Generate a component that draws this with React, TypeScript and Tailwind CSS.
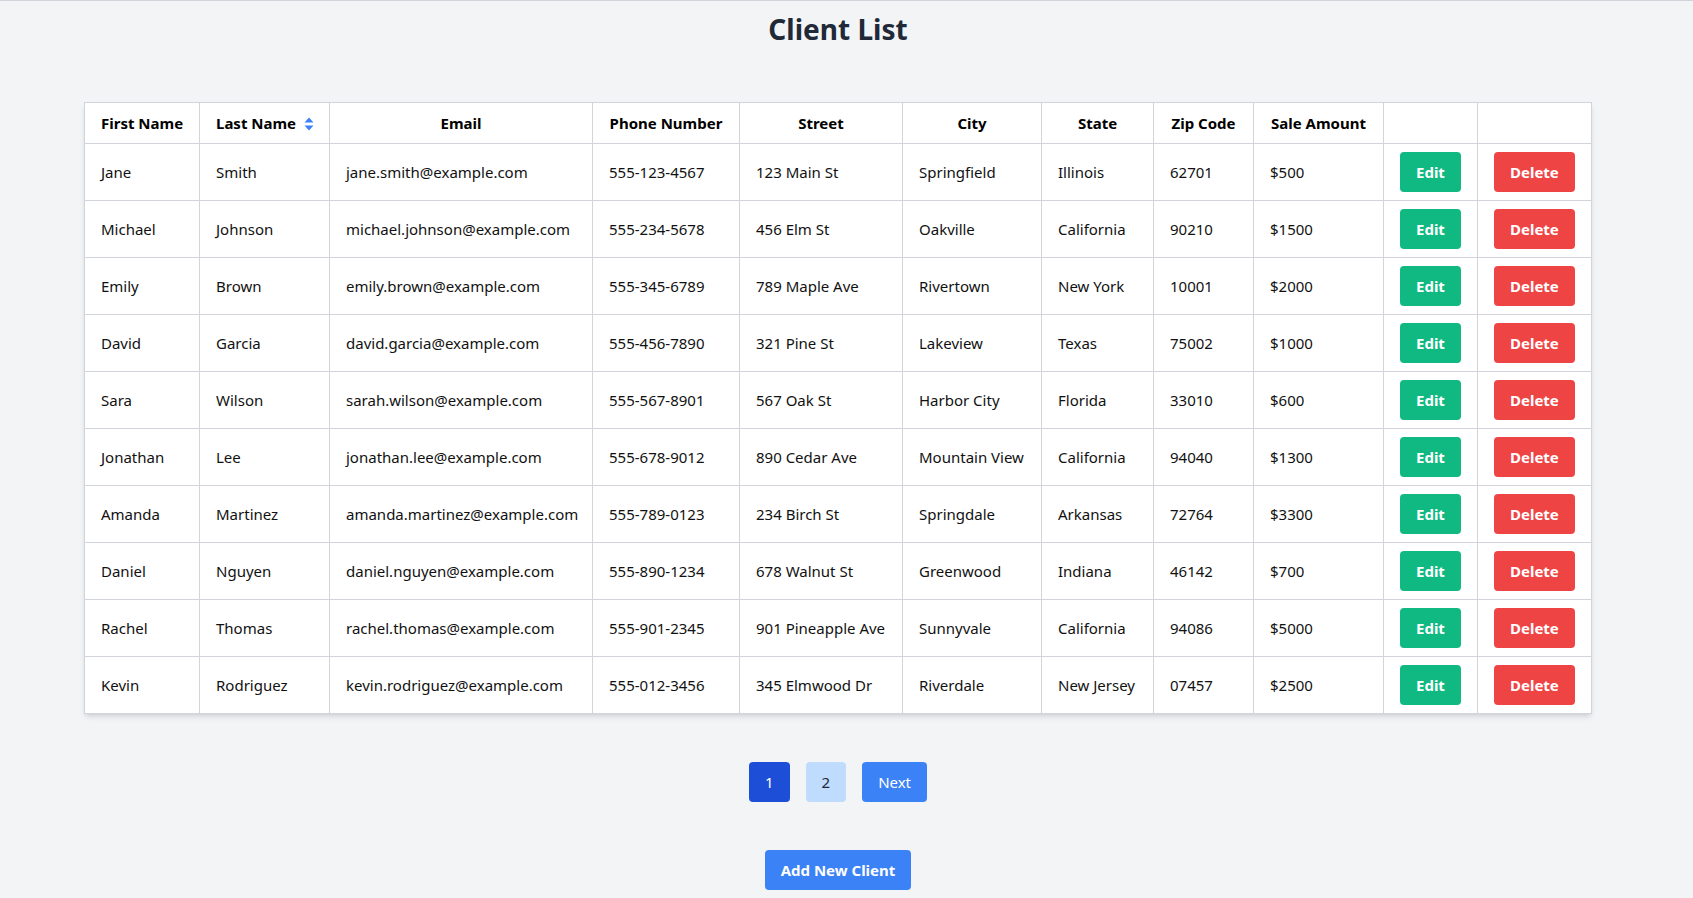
import React from 'react';

type Client = {
  first: string;
  last: string;
  email: string;
  phone: string;
  street: string;
  city: string;
  state: string;
  zip: string;
  amount: string;
};

const clients: Client[] = [
  { first: 'Jane', last: 'Smith', email: 'jane.smith@example.com', phone: '555-123-4567', street: '123 Main St', city: 'Springfield', state: 'Illinois', zip: '62701', amount: '$500' },
  { first: 'Michael', last: 'Johnson', email: 'michael.johnson@example.com', phone: '555-234-5678', street: '456 Elm St', city: 'Oakville', state: 'California', zip: '90210', amount: '$1500' },
  { first: 'Emily', last: 'Brown', email: 'emily.brown@example.com', phone: '555-345-6789', street: '789 Maple Ave', city: 'Rivertown', state: 'New York', zip: '10001', amount: '$2000' },
  { first: 'David', last: 'Garcia', email: 'david.garcia@example.com', phone: '555-456-7890', street: '321 Pine St', city: 'Lakeview', state: 'Texas', zip: '75002', amount: '$1000' },
  { first: 'Sara', last: 'Wilson', email: 'sarah.wilson@example.com', phone: '555-567-8901', street: '567 Oak St', city: 'Harbor City', state: 'Florida', zip: '33010', amount: '$600' },
  { first: 'Jonathan', last: 'Lee', email: 'jonathan.lee@example.com', phone: '555-678-9012', street: '890 Cedar Ave', city: 'Mountain View', state: 'California', zip: '94040', amount: '$1300' },
  { first: 'Amanda', last: 'Martinez', email: 'amanda.martinez@example.com', phone: '555-789-0123', street: '234 Birch St', city: 'Springdale', state: 'Arkansas', zip: '72764', amount: '$3300' },
  { first: 'Daniel', last: 'Nguyen', email: 'daniel.nguyen@example.com', phone: '555-890-1234', street: '678 Walnut St', city: 'Greenwood', state: 'Indiana', zip: '46142', amount: '$700' },
  { first: 'Rachel', last: 'Thomas', email: 'rachel.thomas@example.com', phone: '555-901-2345', street: '901 Pineapple Ave', city: 'Sunnyvale', state: 'California', zip: '94086', amount: '$5000' },
  { first: 'Kevin', last: 'Rodriguez', email: 'kevin.rodriguez@example.com', phone: '555-012-3456', street: '345 Elmwood Dr', city: 'Riverdale', state: 'New Jersey', zip: '07457', amount: '$2500' },
];

function SortIcon() {
  return (
    <svg width="10" height="14" viewBox="0 0 10 14" className="inline-block ml-2 -mt-0.5 align-middle">
      <path d="M5 0.5 L9.5 5.5 H0.5 Z" fill="#3b82f6" />
      <path d="M5 13.5 L9.5 8.5 H0.5 Z" fill="#3b82f6" />
    </svg>
  );
}

const th = 'border border-[#d1d5db] px-4 py-2 text-center font-bold text-black whitespace-nowrap';
const td = 'border border-[#d1d5db] px-4 py-2 text-left text-[#111] whitespace-nowrap';

export default function App() {
  return (
    <div
      className="min-h-screen bg-[#f3f4f6] border-t border-[#d1d5db] pr-[17px] pb-8 text-[15px] leading-6"
      style={{ fontFamily: '"Noto Sans", "Open Sans", sans-serif' }}
    >
      <h1 className="pt-[10px] text-center text-[28px] font-bold text-[#1f2937] leading-9">Client List</h1>

      {/* Table */}
      <div className="mt-[55px] flex justify-center">
        <table className="w-[1507px] table-fixed border-collapse bg-white shadow-md">
          <colgroup>
            <col className="w-[115px]" />
            <col className="w-[130px]" />
            <col className="w-[263px]" />
            <col className="w-[147px]" />
            <col className="w-[163px]" />
            <col className="w-[139px]" />
            <col className="w-[112px]" />
            <col className="w-[100px]" />
            <col className="w-[130px]" />
            <col className="w-[94px]" />
            <col className="w-[114px]" />
          </colgroup>
          <thead>
            <tr>
              <th className={th}>First Name</th>
              <th className={th}>
                Last Name
                <SortIcon />
              </th>
              <th className={th}>Email</th>
              <th className={th}>Phone Number</th>
              <th className={th}>Street</th>
              <th className={th}>City</th>
              <th className={th}>State</th>
              <th className={th}>Zip Code</th>
              <th className={th}>Sale Amount</th>
              <th className={th}></th>
              <th className={th}></th>
            </tr>
          </thead>
          <tbody>
            {clients.map((c) => (
              <tr key={c.email}>
                <td className={td}>{c.first}</td>
                <td className={td}>{c.last}</td>
                <td className={td}>{c.email}</td>
                <td className={td}>{c.phone}</td>
                <td className={td}>{c.street}</td>
                <td className={td}>{c.city}</td>
                <td className={td}>{c.state}</td>
                <td className={td}>{c.zip}</td>
                <td className={td}>{c.amount}</td>
                <td className={td}>
                  <button className="rounded bg-[#10b981] px-4 py-2 font-bold text-white">Edit</button>
                </td>
                <td className={td}>
                  <button className="rounded bg-[#ef4444] px-4 py-2 font-bold text-white">Delete</button>
                </td>
              </tr>
            ))}
          </tbody>
        </table>
      </div>

      {/* Pagination */}
      <div className="mt-12 flex justify-center gap-4">
        <button className="rounded bg-[#1d4ed8] px-4 py-2 text-white">1</button>
        <button className="rounded bg-[#bfdbfe] px-4 py-2 text-[#1f2937]">2</button>
        <button className="rounded bg-[#3b82f6] px-4 py-2 text-white">Next</button>
      </div>

      <div className="mt-12 flex justify-center">
        <button className="rounded bg-[#3b82f6] px-4 py-2 font-bold text-white">Add New Client</button>
      </div>
    </div>
  );
}
